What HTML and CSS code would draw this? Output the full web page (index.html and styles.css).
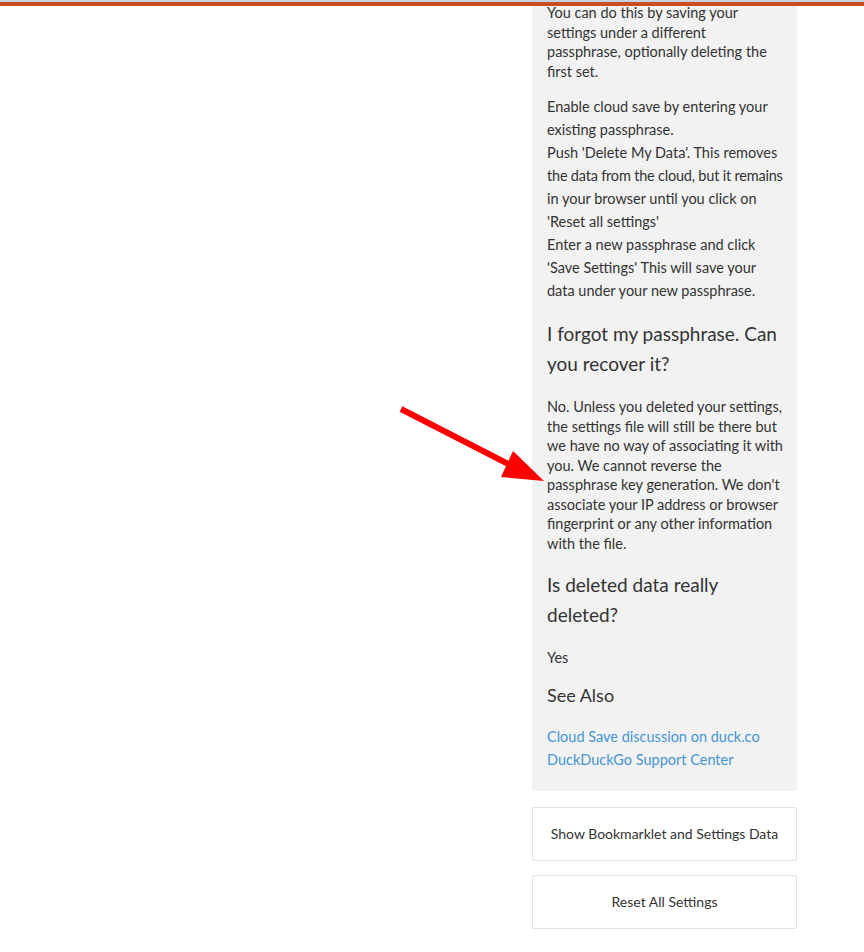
FILE: index.html
```html
<!DOCTYPE html>
<html>
<head>
<meta charset="utf-8">
<link rel="stylesheet" href="styles.css">
</head>
<body>
<header class="topbar"></header>
<main class="page">
  <div class="column">
    <section class="panel">
      <p class="p-tight">You can do this by saving your<br>settings under a different<br>passphrase, optionally deleting the<br>first set.</p>
      <div class="steps">
        <div>Enable cloud save by entering your<br>existing passphrase.</div>
        <div>Push 'Delete My Data'. This removes<br><span class="tight">the data from the cloud, but it remains</span><br>in your browser until you click on<br>'Reset all settings'</div>
        <div>Enter a new passphrase and click<br>'Save Settings' This will save your<br>data under your new passphrase.</div>
      </div>
      <h3 class="q">I forgot my passphrase. Can<br>you recover it?</h3>
      <p class="p-tight p-gap">No. Unless you deleted your settings,<br>the settings file will still be there but<br>we have no way of associating it with<br>you. We cannot reverse the<br>passphrase key generation. We don't<br>associate your IP address or browser<br>fingerprint or any other information<br>with the file.</p>
      <h3 class="q">Is deleted data really<br>deleted?</h3>
      <p class="p-tight p-yes">Yes</p>
      <h3 class="q q-see">See Also</h3>
      <ul class="links">
        <li><a href="#">Cloud Save discussion on duck.co</a></li>
        <li><a href="#">DuckDuckGo Support Center</a></li>
      </ul>
    </section>
    <button class="btn">Show Bookmarklet and Settings Data</button>
    <button class="btn">Reset All Settings</button>
  </div>
</main>
<svg class="arrow" width="160" height="90" viewBox="390 400 160 90" xmlns="http://www.w3.org/2000/svg">
  <line x1="401" y1="409" x2="512" y2="466" stroke="#ff0000" stroke-width="6"/>
  <polygon points="513,451 501,477 544,481" fill="#ff0000"/>
</svg>
</body>
</html>
```
FILE: styles.css
```css
html, body {
  margin: 0;
  padding: 0;
  background: #fff;
}
body {
  font-family: "Lato", "Open Sans", sans-serif;
  font-size: 14.5px;
  color: #333;
  position: relative;
  min-height: 952px;
}
.topbar {
  position: fixed;
  top: 0;
  left: 0;
  right: 0;
  height: 4px;
  border-top: 2px solid #c9d3dc;
  background: #cc4b22;
  z-index: 10;
}
.page {
  display: flex;
  justify-content: flex-end;
  padding-right: 67px;
}
.column {
  width: 265px;
  display: flex;
  flex-direction: column;
}
.panel {
  background: #f2f2f2;
  border-radius: 0 0 2px 2px;
  padding: 3px 15px 20px;
  white-space: nowrap;
}
.panel p { margin: 0; }
.p-tight {
  line-height: 19.5px;
  margin-bottom: 13.5px !important;
}
.steps {
  line-height: 23px;
  margin-bottom: 17.5px;
}
.tight { letter-spacing: -0.2px; }
.q {
  font-size: 19px;
  font-weight: 400;
  line-height: 30px;
  margin: 0 0 18px;
  color: #333;
}
.p-gap { margin-bottom: 16.5px !important; }
.p-yes { margin-bottom: 13.3px !important; }
.q-see {
  font-size: 18px;
  margin-bottom: 14.5px;
}
.links {
  list-style: none;
  margin: 0;
  padding: 0;
  line-height: 23px;
}
.links a {
  color: #4495d4;
  text-decoration: none;
}
.btn {
  margin-top: 16px;
  height: 54px;
  background: #fff;
  border: 1px solid #e0e0e0;
  border-radius: 2px;
  font-family: inherit;
  font-size: 14px;
  color: #333;
  padding: 0;
}
.btn + .btn { margin-top: 14px; }
.arrow {
  position: absolute;
  left: 390px;
  top: 400px;
}
```
